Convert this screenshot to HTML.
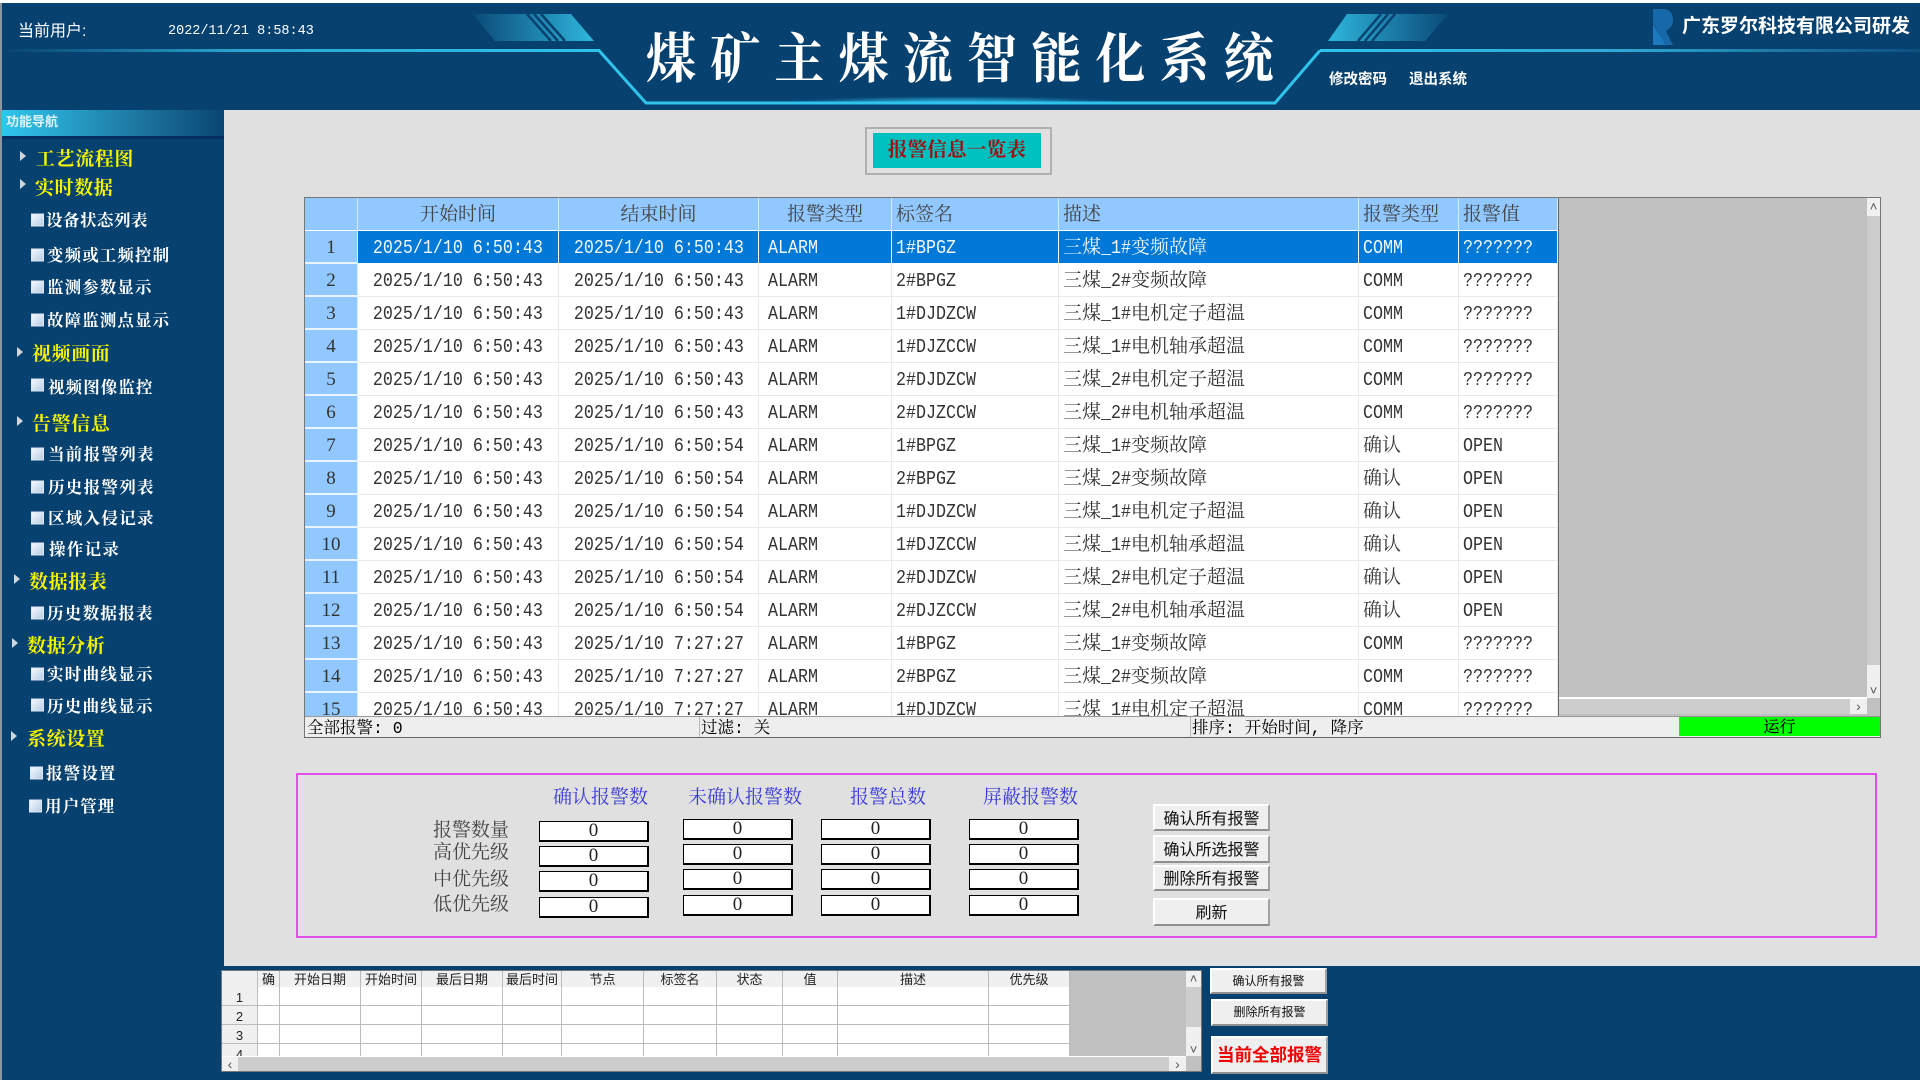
<!DOCTYPE html>
<html lang="zh"><head><meta charset="utf-8"><title>煤矿主煤流智能化系统</title>
<style>
*{box-sizing:border-box;margin:0;padding:0}
html,body{width:1920px;height:1080px;overflow:hidden;background:#e0e0e0;font-family:"Liberation Serif","Noto Serif CJK SC",serif}
.a{position:absolute}
.t{position:absolute;white-space:nowrap;line-height:1}
.s{font-family:"Liberation Sans","Noto Sans CJK SC",sans-serif}
.y{position:absolute;white-space:nowrap;line-height:1;color:#f4f400;font-size:19px;letter-spacing:.6px;font-weight:700;font-family:"Noto Serif CJK SC",serif;transform:translateY(calc(-50% - .5px))}
.w{position:absolute;white-space:nowrap;line-height:1;color:#fff;font-size:16.5px;letter-spacing:1.1px;font-weight:700;font-family:"Noto Serif CJK SC",serif;transform:translateY(calc(-50% - .6px))}
.ar{position:absolute;width:0;height:0;border-left:6px solid #cfd6dc;border-top:5px solid transparent;border-bottom:5px solid transparent;transform:translateY(-50%)}
.ic{position:absolute;width:13px;height:13px;background:linear-gradient(135deg,#f4f9ff,#b9cde4);border:1px solid #dce8f5;transform:translateY(-50%)}
#g{position:absolute;left:305px;top:198px;border-collapse:separate;border-spacing:0;table-layout:fixed;width:1253px;font-size:19px;color:#333}
#g td,#g th{height:33px;padding:2px 0 0 4px;border-right:1px solid #eaeaea;border-bottom:1px solid #eaeaea;overflow:hidden;white-space:nowrap;font-weight:400;text-align:left;background:#fff;line-height:20px;vertical-align:middle}
#g th{background:#90c8ff;border-right:1px solid #d8ecff;border-bottom:1px solid #fff;color:#444}
#g td.n{background:#90c8ff;text-align:center;padding:2px 0 0;border-right:1px solid #d8ecff;border-bottom:2px solid #e8f4ff;color:#333}
#g th.c{text-align:center;padding:2px 0 0}
#g td.c{text-align:center;padding:2px 0 0}
#g td.p{padding-left:9px}
#g b{display:inline-block;font-weight:400;font-family:"Liberation Mono",monospace;font-size:19px;transform:scaleX(.877);transform-origin:0 50%}
#g td.c b{transform-origin:50% 50%}
#g i{display:inline-block;font-style:normal;font-family:"Liberation Mono",monospace;font-size:19px;transform:scaleX(.877);transform-origin:0 50%;margin-right:-4.2px}
#g tr.sel td:not(.n){background:#0078d7;color:#f0f8ff;border-color:#fff}
.box{position:absolute;width:110px;height:21px;background:#fff;border:1px solid #000;border-width:1px 2px 2px 1px;text-align:center;font:19px/18px "Liberation Serif",serif;color:#222}
.btn{position:absolute;background:#efefef;border-top:2px solid #fff;border-left:2px solid #fff;border-right:2px solid #a0a0a0;border-bottom:2px solid #8f8f8f;text-align:center;font-family:"Liberation Sans","Noto Sans CJK SC",sans-serif;color:#111;display:flex;align-items:center;justify-content:center;font-size:16px;padding-bottom:2px}
.hd{position:absolute;font-size:19px;color:#3a3ad8;line-height:1;white-space:nowrap}
.lb{position:absolute;font-size:19px;color:#444;line-height:1;white-space:nowrap;left:433px}
.st{position:absolute;white-space:nowrap;line-height:1;top:721px;font:16.5px/1 "Liberation Mono","Noto Serif CJK SC",monospace;color:#000}
#b{position:absolute;left:222px;top:971px;border-collapse:separate;border-spacing:0;table-layout:fixed;width:848px;font-family:"Liberation Sans","Noto Sans CJK SC",sans-serif;font-size:13px;color:#222}
#b th{height:16px;background:#f0f0f0;font-weight:400;border-right:1px solid #bbb;line-height:14px;overflow:hidden;padding:1px 0 0;white-space:nowrap}
#b td{height:19px;background:#fff;border-right:1px solid #bbb;border-bottom:1px solid #bbb;padding:3px 0 0;text-align:center;line-height:14px;overflow:hidden}
#b td:first-child{background:#f0f0f0}
</style></head><body>

<!-- Header -->
<div class="a" style="left:0;top:0;width:1920px;height:3px;background:#fff"></div>
<div class="a" style="left:0;top:3px;width:1920px;height:107px;background:#07416f"></div>
<svg class="a" style="left:0;top:0" width="1920" height="110" viewBox="0 0 1920 110">
<defs>
<linearGradient id="l1" x1="0" x2="1" y1="0" y2="0"><stop offset="0" stop-color="#07416f"/><stop offset=".4" stop-color="#2aa6cf"/><stop offset="1" stop-color="#2fc4ec"/></linearGradient>
<linearGradient id="l2" x1="0" x2="1" y1="0" y2="0"><stop offset="0" stop-color="#2fc4ec"/><stop offset=".5" stop-color="#2fa8d2"/><stop offset="1" stop-color="#0d4f7f"/></linearGradient>
<linearGradient id="d1" x1="0" x2="1" y1="0" y2="0"><stop offset="0" stop-color="#0b4a78"/><stop offset="1" stop-color="#2eb6dc"/></linearGradient>
<linearGradient id="d2" x1="0" x2="1" y1="0" y2="0"><stop offset="0" stop-color="#2eb6dc"/><stop offset="1" stop-color="#0b4a78"/></linearGradient>
<radialGradient id="gl" cx=".5" cy="1" r=".5" gradientUnits="objectBoundingBox"><stop offset="0" stop-color="#2fc8f0"/><stop offset=".6" stop-color="#1d8cb8" stop-opacity=".7"/><stop offset="1" stop-color="#07416f" stop-opacity="0"/></radialGradient>
</defs>
<polygon points="473,14 571,14 594,41 495,41" fill="url(#d1)"/>
<path d="M527 14L551 41M534 14L558 41M541 14L565 41" stroke="#07416f" stroke-width="2.5"/>
<polygon points="1347,14 1448,14 1425,41 1328,41" fill="url(#d2)"/>
<path d="M1358 41L1381 14M1365 41L1388 14M1372 41L1395 14" stroke="#07416f" stroke-width="2.5"/>
<rect x="0" y="49" width="600" height="3" fill="url(#l1)"/>
<rect x="1320" y="49" width="600" height="3" fill="url(#l2)"/>
<rect x="760" y="88" width="390" height="15" fill="url(#gl)"/>
<path d="M599 50.5L646 103H1275L1320 50.5" fill="none" stroke="#2fc4ec" stroke-width="3"/>
<path d="M1653 9h10c8 0 10 6 10 11s-3 9-7 11l7 14h-7l-13-22z" fill="#1668a8"/>
<path d="M1653 24l13 21h-13z" fill="#1c79bd"/>
</svg>
<div class="t s" style="left:18px;top:24px;color:#fff;font-size:16px">当前用户:</div>
<div class="t" style="left:168px;top:25px;color:#fff;font:13.5px/1 'Liberation Mono',monospace">2022/11/21 8:58:43</div>
<div class="t" style="left:646px;top:30px;color:#fff;font-size:50px;letter-spacing:14.2px;font-weight:700;font-family:'Noto Serif CJK SC',serif;transform:scaleY(1.08)">煤矿主煤流智能化系统</div>
<div class="t s" style="left:1682px;top:17px;color:#fff;font-size:19px;font-weight:700">广东罗尔科技有限公司研发</div>
<div class="t s" style="left:1329px;top:73px;color:#fff;font-size:14.5px;font-weight:700">修改密码</div>
<div class="t s" style="left:1409px;top:73px;color:#fff;font-size:14.5px;font-weight:700">退出系统</div>

<!-- Sidebar -->
<div class="a" style="left:0;top:110px;width:224px;height:970px;background:#07416f"></div>
<div class="a" style="left:0;top:3px;width:2px;height:1077px;background:#8a98a4"></div>
<div class="a" style="left:2px;top:110px;width:222px;height:26px;background:linear-gradient(90deg,#2fc6ee,#1f7fa8 55%,#0a4573)"></div>
<div class="a" style="left:2px;top:136px;width:222px;height:3px;background:#052f62"></div>
<div class="t s" style="left:6px;top:115px;color:#dff2f8;font-size:13px;font-weight:700">功能导航</div>

<div class="ar" style="left:20px;top:156px"></div><div class="y" style="left:36px;top:158px">工艺流程图</div>
<div class="ar" style="left:20px;top:184px"></div><div class="y" style="left:35px;top:187px">实时数据</div>
<div class="ic" style="left:31px;top:220px"></div><div class="w" style="left:46px;top:220px;letter-spacing:.5px">设备状态列表</div>
<div class="ic" style="left:31px;top:255px"></div><div class="w" style="left:47px;top:255px">变频或工频控制</div>
<div class="ic" style="left:31px;top:287px"></div><div class="w" style="left:47px;top:287px">监测参数显示</div>
<div class="ic" style="left:31px;top:320px"></div><div class="w" style="left:47px;top:320px">故障监测点显示</div>
<div class="ar" style="left:17px;top:352px"></div><div class="y" style="left:32px;top:353px">视频画面</div>
<div class="ic" style="left:31px;top:385px"></div><div class="w" style="left:48px;top:387px">视频图像监控</div>
<div class="ar" style="left:17px;top:421px"></div><div class="y" style="left:32px;top:423px">告警信息</div>
<div class="ic" style="left:31px;top:454px"></div><div class="w" style="left:48px;top:454px;letter-spacing:1.3px">当前报警列表</div>
<div class="ic" style="left:31px;top:487px"></div><div class="w" style="left:48px;top:487px;letter-spacing:1.3px">历史报警列表</div>
<div class="ic" style="left:31px;top:518px"></div><div class="w" style="left:48px;top:518px;letter-spacing:1.3px">区域入侵记录</div>
<div class="ic" style="left:31px;top:549px"></div><div class="w" style="left:49px;top:549px;letter-spacing:1.3px">操作记录</div>
<div class="ar" style="left:14px;top:579px"></div><div class="y" style="left:29px;top:581px">数据报表</div>
<div class="ic" style="left:31px;top:613px"></div><div class="w" style="left:47px;top:613px;letter-spacing:1.3px">历史数据报表</div>
<div class="ar" style="left:12px;top:643px"></div><div class="y" style="left:27px;top:645px">数据分析</div>
<div class="ic" style="left:31px;top:674px"></div><div class="w" style="left:47px;top:674px;letter-spacing:1.3px">实时曲线显示</div>
<div class="ic" style="left:31px;top:705px"></div><div class="w" style="left:47px;top:706px;letter-spacing:1.3px">历史曲线显示</div>
<div class="ar" style="left:11px;top:736px"></div><div class="y" style="left:27px;top:738px">系统设置</div>
<div class="ic" style="left:30px;top:773px"></div><div class="w" style="left:46px;top:773px">报警设置</div>
<div class="ic" style="left:29px;top:806px"></div><div class="w" style="left:45px;top:806px">用户管理</div>

<!-- Title button -->
<div class="a" style="left:865px;top:127px;width:187px;height:48px;border:2px solid #b0b0b0"></div>
<div class="a" style="left:873px;top:133px;width:168px;height:35px;background:#00c0c0;color:#a01010;font-size:19.5px;font-weight:700;letter-spacing:.3px;text-align:center;line-height:31px;font-family:'Noto Serif CJK SC',serif;overflow:hidden;white-space:nowrap">报警信息一览表</div>

<!-- Main table frame -->
<div class="a" style="left:304px;top:197px;width:1577px;height:541px;background:#c0c0c0;border:1px solid #777;border-bottom:2px solid #666"></div>
<div class="a" style="left:305px;top:198px;width:1253px;height:518px;overflow:hidden">
<table id="g" style="left:0;top:0">
<colgroup><col style="width:53px"><col style="width:201px"><col style="width:200px"><col style="width:133px"><col style="width:167px"><col style="width:300px"><col style="width:100px"><col style="width:99px"></colgroup>
<tr><th class="c">&nbsp;</th><th class="c">开始时间</th><th class="c">结束时间</th><th class="c">报警类型</th><th>标签名</th><th>描述</th><th>报警类型</th><th>报警值</th></tr>
<tr class="sel"><td class="n">1</td><td class="c"><b>2025/1/10 6:50:43</b></td><td class="c"><b>2025/1/10 6:50:43</b></td><td class="p"><b>ALARM</b></td><td><b>1#BPGZ</b></td><td>三煤<i>_1#</i>变频故障</td><td><b>COMM</b></td><td><b>???????</b></td></tr>
<tr><td class="n">2</td><td class="c"><b>2025/1/10 6:50:43</b></td><td class="c"><b>2025/1/10 6:50:43</b></td><td class="p"><b>ALARM</b></td><td><b>2#BPGZ</b></td><td>三煤<i>_2#</i>变频故障</td><td><b>COMM</b></td><td><b>???????</b></td></tr>
<tr><td class="n">3</td><td class="c"><b>2025/1/10 6:50:43</b></td><td class="c"><b>2025/1/10 6:50:43</b></td><td class="p"><b>ALARM</b></td><td><b>1#DJDZCW</b></td><td>三煤<i>_1#</i>电机定子超温</td><td><b>COMM</b></td><td><b>???????</b></td></tr>
<tr><td class="n">4</td><td class="c"><b>2025/1/10 6:50:43</b></td><td class="c"><b>2025/1/10 6:50:43</b></td><td class="p"><b>ALARM</b></td><td><b>1#DJZCCW</b></td><td>三煤<i>_1#</i>电机轴承超温</td><td><b>COMM</b></td><td><b>???????</b></td></tr>
<tr><td class="n">5</td><td class="c"><b>2025/1/10 6:50:43</b></td><td class="c"><b>2025/1/10 6:50:43</b></td><td class="p"><b>ALARM</b></td><td><b>2#DJDZCW</b></td><td>三煤<i>_2#</i>电机定子超温</td><td><b>COMM</b></td><td><b>???????</b></td></tr>
<tr><td class="n">6</td><td class="c"><b>2025/1/10 6:50:43</b></td><td class="c"><b>2025/1/10 6:50:43</b></td><td class="p"><b>ALARM</b></td><td><b>2#DJZCCW</b></td><td>三煤<i>_2#</i>电机轴承超温</td><td><b>COMM</b></td><td><b>???????</b></td></tr>
<tr><td class="n">7</td><td class="c"><b>2025/1/10 6:50:43</b></td><td class="c"><b>2025/1/10 6:50:54</b></td><td class="p"><b>ALARM</b></td><td><b>1#BPGZ</b></td><td>三煤<i>_1#</i>变频故障</td><td>确认</td><td><b>OPEN</b></td></tr>
<tr><td class="n">8</td><td class="c"><b>2025/1/10 6:50:43</b></td><td class="c"><b>2025/1/10 6:50:54</b></td><td class="p"><b>ALARM</b></td><td><b>2#BPGZ</b></td><td>三煤<i>_2#</i>变频故障</td><td>确认</td><td><b>OPEN</b></td></tr>
<tr><td class="n">9</td><td class="c"><b>2025/1/10 6:50:43</b></td><td class="c"><b>2025/1/10 6:50:54</b></td><td class="p"><b>ALARM</b></td><td><b>1#DJDZCW</b></td><td>三煤<i>_1#</i>电机定子超温</td><td>确认</td><td><b>OPEN</b></td></tr>
<tr><td class="n">10</td><td class="c"><b>2025/1/10 6:50:43</b></td><td class="c"><b>2025/1/10 6:50:54</b></td><td class="p"><b>ALARM</b></td><td><b>1#DJZCCW</b></td><td>三煤<i>_1#</i>电机轴承超温</td><td>确认</td><td><b>OPEN</b></td></tr>
<tr><td class="n">11</td><td class="c"><b>2025/1/10 6:50:43</b></td><td class="c"><b>2025/1/10 6:50:54</b></td><td class="p"><b>ALARM</b></td><td><b>2#DJDZCW</b></td><td>三煤<i>_2#</i>电机定子超温</td><td>确认</td><td><b>OPEN</b></td></tr>
<tr><td class="n">12</td><td class="c"><b>2025/1/10 6:50:43</b></td><td class="c"><b>2025/1/10 6:50:54</b></td><td class="p"><b>ALARM</b></td><td><b>2#DJZCCW</b></td><td>三煤<i>_2#</i>电机轴承超温</td><td>确认</td><td><b>OPEN</b></td></tr>
<tr><td class="n">13</td><td class="c"><b>2025/1/10 6:50:43</b></td><td class="c"><b>2025/1/10 7:27:27</b></td><td class="p"><b>ALARM</b></td><td><b>1#BPGZ</b></td><td>三煤<i>_1#</i>变频故障</td><td><b>COMM</b></td><td><b>???????</b></td></tr>
<tr><td class="n">14</td><td class="c"><b>2025/1/10 6:50:43</b></td><td class="c"><b>2025/1/10 7:27:27</b></td><td class="p"><b>ALARM</b></td><td><b>2#BPGZ</b></td><td>三煤<i>_2#</i>变频故障</td><td><b>COMM</b></td><td><b>???????</b></td></tr>
<tr><td class="n">15</td><td class="c"><b>2025/1/10 6:50:43</b></td><td class="c"><b>2025/1/10 7:27:27</b></td><td class="p"><b>ALARM</b></td><td><b>1#DJDZCW</b></td><td>三煤<i>_1#</i>电机定子超温</td><td><b>COMM</b></td><td><b>???????</b></td></tr>
</table>
</div>
<div class="a" style="left:1558px;top:198px;width:1px;height:518px;background:#666"></div>

<!-- Main scrollbars -->
<div class="a" style="left:1867px;top:198px;width:13px;height:18px;background:#f0f0f0;color:#555;font:13px/18px 'Liberation Sans';text-align:center">&#708;</div>
<div class="a" style="left:1867px;top:216px;width:13px;height:449px;background:#cdcdcd"></div>
<div class="a" style="left:1867px;top:665px;width:13px;height:33px;background:#f0f0f0;color:#555;font:13px/52px 'Liberation Sans';text-align:center">&#709;</div>
<div class="a" style="left:1559px;top:697px;width:308px;height:2px;background:#fff"></div>
<div class="a" style="left:1559px;top:699px;width:291px;height:15px;background:#cdcdcd"></div>
<div class="a" style="left:1850px;top:699px;width:17px;height:15px;background:#f0f0f0;color:#555;font:14px/15px 'Liberation Sans';text-align:center">&#8250;</div>

<!-- Status bar -->
<div class="a" style="left:305px;top:716px;width:1575px;height:21px;background:#eee;border-top:1px solid #999"></div>
<div class="a" style="left:699px;top:717px;width:1px;height:20px;background:#bbb"></div>
<div class="a" style="left:1190px;top:717px;width:1px;height:20px;background:#bbb"></div>
<div class="st" style="left:307px">全部报警: 0</div>
<div class="st" style="left:701px">过滤: 关</div>
<div class="st" style="left:1192px">排序: 开始时间, 降序</div>
<div class="a" style="left:1679px;top:717px;width:201px;height:19px;background:#00ff00;text-align:center;font-size:16px;line-height:21px;color:#000;-webkit-text-stroke:.2px #000;overflow:hidden">运行</div>

<!-- Summary box -->
<div class="a" style="left:296px;top:773px;width:1581px;height:165px;border:2px solid #e050e8"></div>
<div class="hd" style="left:553px;top:788px">确认报警数</div>
<div class="hd" style="left:688px;top:788px">未确认报警数</div>
<div class="hd" style="left:850px;top:788px">报警总数</div>
<div class="hd" style="left:983px;top:788px">屏蔽报警数</div>
<div class="lb" style="top:821px">报警数量</div>
<div class="lb" style="top:843px">高优先级</div>
<div class="lb" style="top:870px">中优先级</div>
<div class="lb" style="top:895px">低优先级</div>

<div class="box" style="left:539px;top:821px">0</div><div class="box" style="left:539px;top:846px">0</div><div class="box" style="left:539px;top:871px">0</div><div class="box" style="left:539px;top:897px">0</div>
<div class="box" style="left:683px;top:819px">0</div><div class="box" style="left:683px;top:844px">0</div><div class="box" style="left:683px;top:869px">0</div><div class="box" style="left:683px;top:895px">0</div>
<div class="box" style="left:821px;top:819px">0</div><div class="box" style="left:821px;top:844px">0</div><div class="box" style="left:821px;top:869px">0</div><div class="box" style="left:821px;top:895px">0</div>
<div class="box" style="left:969px;top:819px">0</div><div class="box" style="left:969px;top:844px">0</div><div class="box" style="left:969px;top:869px">0</div><div class="box" style="left:969px;top:895px">0</div>

<div class="btn" style="left:1153px;top:804px;width:117px;height:27px">确认所有报警</div>
<div class="btn" style="left:1153px;top:835px;width:117px;height:28px">确认所选报警</div>
<div class="btn" style="left:1153px;top:865px;width:117px;height:26px">删除所有报警</div>
<div class="btn" style="left:1153px;top:898px;width:117px;height:28px">刷新</div>

<!-- Bottom band -->
<div class="a" style="left:224px;top:966px;width:1696px;height:114px;background:#07416f"></div>
<div class="a" style="left:221px;top:970px;width:981px;height:102px;background:#c0c0c0;border:1px solid #777"></div>
<div class="a" style="left:222px;top:971px;width:848px;height:86px;overflow:hidden">
<table id="b" style="left:0;top:0">
<colgroup><col style="width:36px"><col style="width:22px"><col style="width:81px"><col style="width:61px"><col style="width:81px"><col style="width:59px"><col style="width:82px"><col style="width:73px"><col style="width:66px"><col style="width:55px"><col style="width:151px"><col style="width:81px"></colgroup>
<tr><th></th><th>确</th><th>开始日期</th><th>开始时间</th><th>最后日期</th><th>最后时间</th><th>节点</th><th>标签名</th><th>状态</th><th>值</th><th>描述</th><th>优先级</th></tr>
<tr><td>1</td><td></td><td></td><td></td><td></td><td></td><td></td><td></td><td></td><td></td><td></td><td></td></tr>
<tr><td>2</td><td></td><td></td><td></td><td></td><td></td><td></td><td></td><td></td><td></td><td></td><td></td></tr>
<tr><td>3</td><td></td><td></td><td></td><td></td><td></td><td></td><td></td><td></td><td></td><td></td><td></td></tr>
<tr><td>4</td><td></td><td></td><td></td><td></td><td></td><td></td><td></td><td></td><td></td><td></td><td></td></tr>
</table>
</div>
<div class="a" style="left:222px;top:1056px;width:964px;height:1px;background:#fff"></div>
<div class="a" style="left:222px;top:1057px;width:964px;height:14px;background:#cdcdcd"></div>
<div class="a" style="left:222px;top:1057px;width:16px;height:14px;background:#f0f0f0;color:#555;font:14px/14px 'Liberation Sans';text-align:center">&#8249;</div>
<div class="a" style="left:1169px;top:1057px;width:17px;height:14px;background:#f0f0f0;color:#555;font:14px/14px 'Liberation Sans';text-align:center">&#8250;</div>
<div class="a" style="left:1186px;top:971px;width:15px;height:16px;background:#f0f0f0;color:#555;font:13px/16px 'Liberation Sans';text-align:center">&#708;</div>
<div class="a" style="left:1186px;top:987px;width:15px;height:40px;background:#cdcdcd"></div>
<div class="a" style="left:1186px;top:1027px;width:15px;height:29px;background:#f0f0f0;color:#555;font:13px/46px 'Liberation Sans';text-align:center">&#709;</div>

<div class="btn" style="left:1210px;top:968px;width:117px;height:26px;font-size:12px">确认所有报警</div>
<div class="btn" style="left:1211px;top:999px;width:117px;height:27px;font-size:12px">删除所有报警</div>
<div class="btn" style="left:1211px;top:1036px;width:117px;height:38px;font-size:17.5px;font-weight:700;color:#f00000">当前全部报警</div>
</body></html>
